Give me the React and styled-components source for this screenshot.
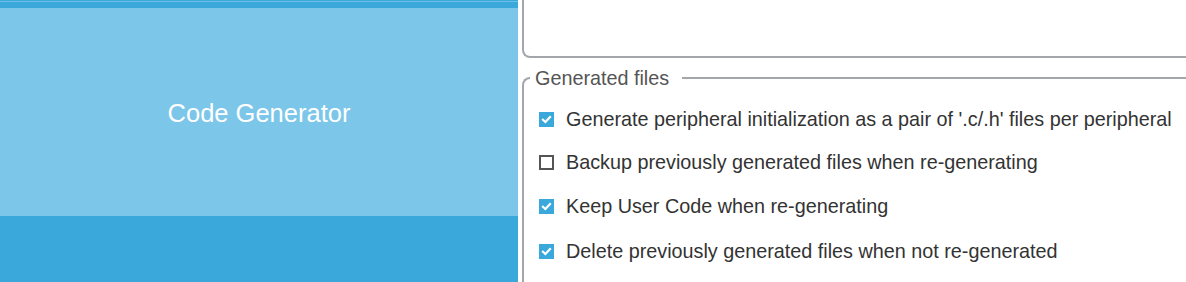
import React from "react";
import styled, { createGlobalStyle } from "styled-components";

const Global = createGlobalStyle`
  html, body { margin: 0; padding: 0; background: #ffffff; overflow: hidden; }
  body { font-family: "Liberation Sans", Arial, sans-serif; }
`;

const Page = styled.div`
  width: 1186px;
  height: 282px;
  display: flex;
  gap: 4px;
  overflow: hidden;
  background: #fff;
`;

const LeftPanel = styled.div`
  width: 518px;
  flex: none;
  display: flex;
  flex-direction: column;
  background: #3aa8da;
`;

const TopStripe = styled.div`
  height: 8px;
  flex: none;
  background: linear-gradient(
    to bottom,
    #3aa8da 0px,
    #3aa8da 1px,
    #6dbde4 1px,
    #6dbde4 2px,
    #3aa8da 2px
  );
`;

const Tile = styled.div`
  height: 208px;
  flex: none;
  background: #7cc6e9;
  display: flex;
  align-items: center;
  justify-content: center;
  color: #ffffff;
  font-size: 25.5px;
  padding-top: 2px;
  box-sizing: border-box;
`;

const RightColumn = styled.div`
  flex: 1;
  min-width: 0;
  display: flex;
  flex-direction: column;
  gap: 9px;
`;

const UpperBox = styled.div`
  width: calc(100% + 20px);
  height: 58px;
  flex: none;
  box-sizing: border-box;
  border: 2px solid #a3a7ab;
  border-top: none;
  border-right: none;
  border-bottom-left-radius: 8px;
`;

const FieldSet = styled.fieldset`
  width: calc(100% + 20px);
  box-sizing: border-box;
  margin: 0;
  padding: 8px 0 0 0;
  border: 2px solid #a3a7ab;
  border-right: none;
  border-bottom: none;
  border-top-left-radius: 8px;
  flex: 1;
  min-height: 0;
`;

const Legend = styled.legend`
  margin-left: 6px;
  padding: 0 13px 0 5px;
  font-size: 19.8px;
  line-height: 22px;
  color: #555555;
`;

const Row = styled.label`
  display: flex;
  align-items: center;
  height: ${(p) => p.$h}px;
  padding-left: 15px;
  gap: 12px;
  font-size: 19.8px;
  color: #333333;
  white-space: nowrap;
`;

const Box = styled.span`
  width: 15px;
  height: 15px;
  flex: none;
  box-sizing: border-box;
  display: flex;
  align-items: center;
  justify-content: center;
  background: ${(p) => (p.$checked ? "#3aa8da" : "#ffffff")};
  border: ${(p) => (p.$checked ? "none" : "2px solid #555555")};
`;

const Check = () => (
  <svg width="11" height="11" viewBox="0 0 10 10">
    <path
      d="M1.8 5.2 L4 7.3 L8.2 2.8"
      fill="none"
      stroke="#ffffff"
      strokeWidth="2"
      strokeLinecap="square"
    />
  </svg>
);

const options = [
  { label: "Generate peripheral initialization as a pair of '.c/.h' files per peripheral", checked: true, h: 44 },
  { label: "Backup previously generated files when re-generating", checked: false, h: 42 },
  { label: "Keep User Code when re-generating", checked: true, h: 46 },
  { label: "Delete previously generated files when not re-generated", checked: true, h: 44 },
];

export default function App() {
  return (
    <>
      <Global />
      <Page>
        <LeftPanel>
          <TopStripe />
          <Tile>Code Generator</Tile>
        </LeftPanel>
        <RightColumn>
          <UpperBox />
          <FieldSet>
            <Legend>Generated files</Legend>
            {options.map((o) => (
              <Row key={o.label} $h={o.h}>
                <Box $checked={o.checked}>{o.checked && <Check />}</Box>
                {o.label}
              </Row>
            ))}
          </FieldSet>
        </RightColumn>
      </Page>
    </>
  );
}
